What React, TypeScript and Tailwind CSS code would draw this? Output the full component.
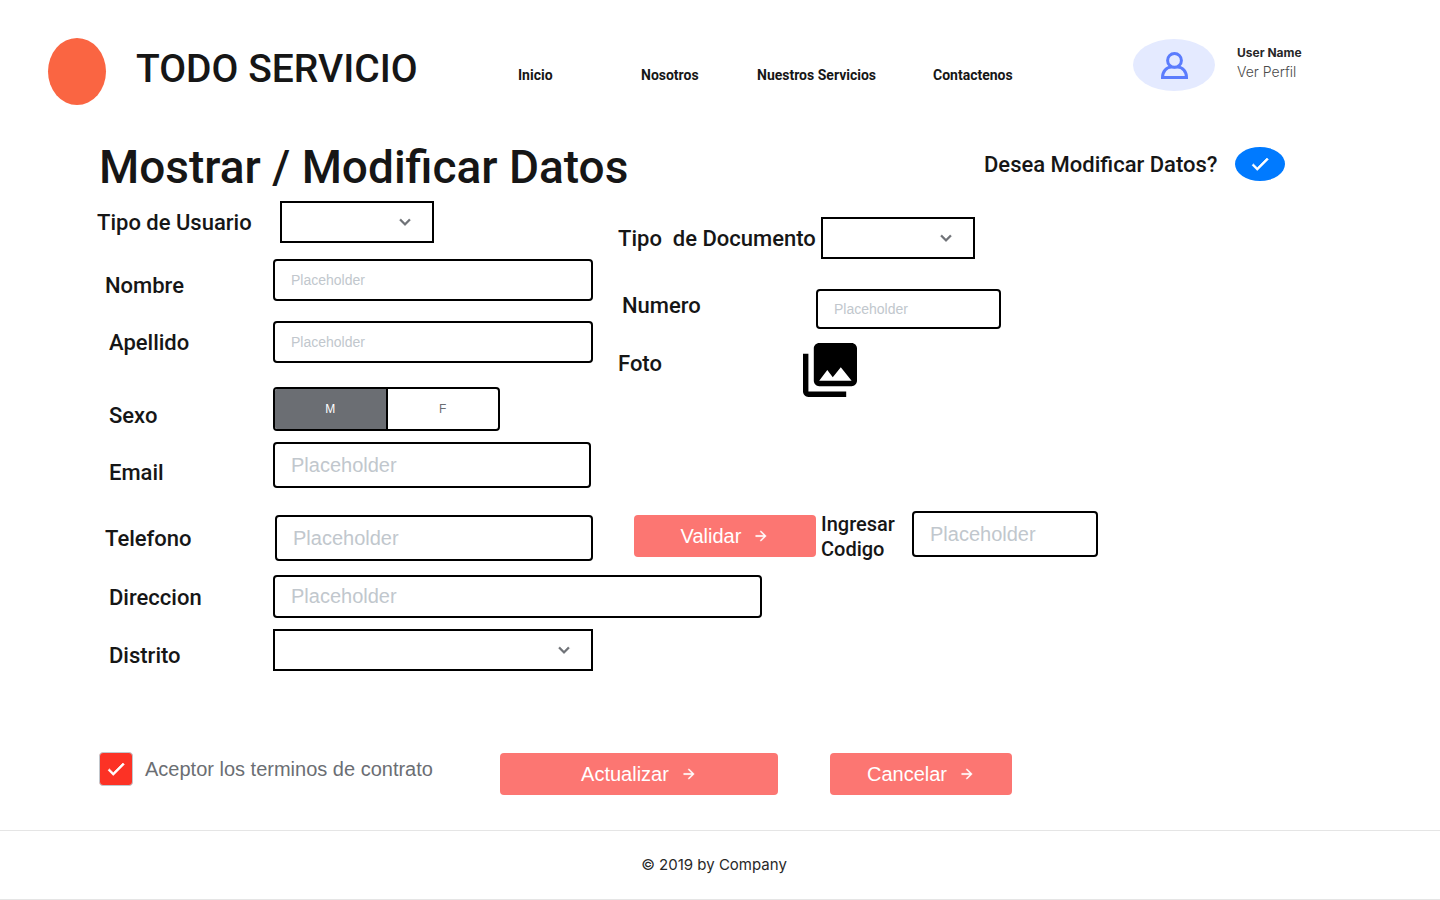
import type { ReactNode } from "react";

const HEADING = "font-['Roboto','Liberation_Sans',sans-serif] font-medium text-[#161616]";
const LABEL = "font-['Roboto','Liberation_Sans',sans-serif] font-medium text-[#161616] text-[22px] leading-[30px] pt-0.5 whitespace-nowrap";
const BOX = "border-2 border-black bg-white";
const FIELD = "border-2 border-black bg-white rounded px-4 outline-none placeholder:text-[#c1c7cd]";

function CheckIcon() {
  return (
    <svg viewBox="0 0 24 24" className="pointer-events-none absolute size-[22px] fill-white stroke-white stroke-[0.8]" aria-hidden="true">
      <path d="M9 16.17 4.83 12l-1.42 1.41L9 19 21 7l-1.41-1.41z" />
    </svg>
  );
}

function Dropdown({ id, className }: { id: string; className: string }) {
  return (
    <div className={`relative h-[42px] ${className}`}>
      <select id={id} className={`${BOX} size-full appearance-none px-4 outline-none`} defaultValue="">
        <option value=""></option>
      </select>
      <svg viewBox="0 0 24 24" className="pointer-events-none absolute top-[10px] right-[18px] size-[22px] fill-[#6f7277] stroke-[#6f7277] stroke-[0.4]" aria-hidden="true">
        <path d="M16.59 8.59 12 13.17 7.41 8.59 6 10l6 6 6-6z" />
      </svg>
    </div>
  );
}

function ActionButton({ children, className, type = "button" }: { children: ReactNode; className: string; type?: "button" | "submit" }) {
  return (
    <button type={type} className={`flex h-[42px] items-center justify-center gap-3 rounded bg-[#fc7672] text-xl text-white ${className}`}>
      {children}
      <svg viewBox="0 0 24 24" className="size-4 fill-white stroke-white stroke-[0.5]" aria-hidden="true">
        <path d="m12 4-1.41 1.41L16.17 11H4v2h12.17l-5.58 5.59L12 20l8-8z" />
      </svg>
    </button>
  );
}

function Header() {
  return (
    <header className="flex h-[143px] items-start pt-[38px] pl-12">
      <div className="h-[67px] w-[58px] shrink-0 rounded-[50%] bg-[#fa6542]" />
      <div className={`${HEADING} w-[412px] shrink-0 pl-[30px] text-[39px] leading-[62px] whitespace-nowrap`}>TODO SERVICIO</div>
      <nav className="grid shrink-0 grid-cols-[123px_116px_176px_200px] pt-[27px] font-['Roboto','Liberation_Sans',sans-serif] text-sm leading-5 font-bold whitespace-nowrap text-[#161616]">
        <a href="#inicio">Inicio</a>
        <a href="#nosotros">Nosotros</a>
        <a href="#servicios">Nuestros Servicios</a>
        <a href="#contacto">Contactenos</a>
      </nav>
      <div className="flex items-start gap-[22px] pt-px">
        <div className="flex h-[52px] w-[82px] items-center justify-center rounded-[50%] bg-[#e4eaff]">
          <svg viewBox="0 0 27 27" className="size-[27px] fill-[#e4eaff] stroke-[#5b7cfd] stroke-3" aria-hidden="true">
            <path d="M1.500 25.500c0-6 4-10.500 9-10.500h6c5 0 9 4.500 9 10.500z" />
            <circle cx="13.5" cy="8.4" r="6.9" />
          </svg>
        </div>
        <div className="pt-1 font-['Inter','Open_Sans',sans-serif] whitespace-nowrap">
          <div className="text-[12px] leading-5 font-bold text-[#282828]">User Name</div>
          <a href="#perfil" className="block text-[14px] leading-[18px] font-light text-[#4a4a4a]">Ver Perfil</a>
        </div>
      </div>
    </header>
  );
}

export default function App() {
  return (
    <div className="min-h-[900px] overflow-hidden bg-white font-['Liberation_Sans',Arial,sans-serif]">
      <Header />
      <main className="pl-[97px]">
        <div className="flex h-[58px] items-start">
          <h1 className={`${HEADING} w-[887px] shrink-0 pl-0.5 text-[46px] leading-[48px]`}>Mostrar / Modificar Datos</h1>
          <div className="flex h-[42px] items-center">
            <label htmlFor="modificar" className={`${LABEL} w-[251px]`}>Desea Modificar Datos?</label>
            <span className="relative flex items-center justify-center">
              <input id="modificar" type="checkbox" defaultChecked className="h-[34px] w-[50px] appearance-none rounded-[50%] bg-[#007aff]" />
              <CheckIcon />
            </span>
          </div>
        </div>

        <form>
          <div className="flex items-start">
            <div className="w-[521px] shrink-0">
              <div className="flex items-center">
                <label htmlFor="usuario" className={`${LABEL} w-[183px]`}>Tipo de Usuario</label>
                <Dropdown id="usuario" className="w-[154px]" />
              </div>
              <div className="mt-4 flex items-end">
                <label htmlFor="nombre" className={`${LABEL} w-44 pl-2`}>Nombre</label>
                <input id="nombre" type="text" placeholder="Placeholder" className={`${FIELD} h-[42px] w-80 text-sm`} />
              </div>
              <div className="mt-5 flex items-center">
                <label htmlFor="apellido" className={`${LABEL} w-44 pl-3`}>Apellido</label>
                <input id="apellido" type="text" placeholder="Placeholder" className={`${FIELD} h-[42px] w-80 text-sm`} />
              </div>
              <div role="radiogroup" aria-labelledby="sexo" className="mt-6 flex items-end">
                <span id="sexo" className={`${LABEL} w-44 pl-3`}>Sexo</span>
                <div className={`${BOX} flex h-11 w-[227px] overflow-hidden rounded text-xs`}>
                  <label className="flex flex-1 items-center justify-center border-r-2 border-black text-[#6b6e73] has-checked:bg-[#6b6e73] has-checked:text-white">
                    <input type="radio" name="sexo" value="M" defaultChecked className="sr-only" />M
                  </label>
                  <label className="flex flex-1 items-center justify-center text-[#6b6e73] has-checked:bg-[#6b6e73] has-checked:text-white">
                    <input type="radio" name="sexo" value="F" className="sr-only" />F
                  </label>
                </div>
              </div>
              <div className="mt-[11px] flex items-end">
                <label htmlFor="email" className={`${LABEL} w-44 pl-3`}>Email</label>
                <input id="email" type="email" placeholder="Placeholder" className={`${FIELD} h-[46px] w-[318px] text-xl`} />
              </div>
            </div>

            <div className="pt-4">
              <div className="flex items-center">
                <label htmlFor="documento" className={`${LABEL} w-[203px] whitespace-pre`}>{"Tipo  de Documento"}</label>
                <Dropdown id="documento" className="w-[154px]" />
              </div>
              <div className="mt-[30px] flex items-start">
                <label htmlFor="numero" className={`${LABEL} w-[198px] pl-1`}>Numero</label>
                <input id="numero" type="text" placeholder="Placeholder" className={`${FIELD} h-10 w-[185px] text-sm`} />
              </div>
              <div className="mt-[14px] flex items-start">
                <div className="w-[185px] pt-1">
                  <span className={`${LABEL} block`}>Foto</span>
                </div>
                <button type="button" aria-label="Foto">
                  <svg viewBox="2 2 20 20" className="size-[54px] fill-black" aria-hidden="true">
                    <path d="M22 16V4c0-1.100-.9-2-2-2H8c-1.100 0-2 .9-2 2v12c0 1.100.9 2 2 2h12c1.100 0 2-.9 2-2zm-11-4 2.030 2.710L16 11l4 5H8l3-4zM2 6v14c0 1.100.9 2 2 2h14v-2H4V6H2z" />
                  </svg>
                </button>
              </div>
            </div>
          </div>

          <div className="mt-[23px] flex items-start">
            <div className="flex w-[537px] shrink-0 items-center pt-1">
              <label htmlFor="telefono" className={`${LABEL} w-[178px] pl-2`}>Telefono</label>
              <input id="telefono" type="tel" placeholder="Placeholder" className={`${FIELD} h-[46px] w-[318px] text-xl`} />
            </div>
            <ActionButton className="mt-1 w-[182px]">Validar</ActionButton>
            <label htmlFor="codigo" className={`${HEADING} w-24 pt-px pl-[5px] text-xl leading-[25px]`}>Ingresar Codigo</label>
            <input id="codigo" type="text" placeholder="Placeholder" className={`${FIELD} h-[46px] w-[186px] text-xl`} />
          </div>
          <div className="mt-[13px] flex items-center">
            <label htmlFor="direccion" className={`${LABEL} w-44 pl-3`}>Direccion</label>
            <input id="direccion" type="text" placeholder="Placeholder" className={`${FIELD} h-[43px] w-[489px] text-xl`} />
          </div>
          <div className="mt-[11px] flex items-end">
            <label htmlFor="distrito" className={`${LABEL} w-44 pl-3`}>Distrito</label>
            <Dropdown id="distrito" className="w-80" />
          </div>

          <div className="mt-[81px] flex h-[78px] items-start pl-0.5">
            <label className="flex w-[401px] items-center gap-3 text-xl text-[#6b6e73]">
              <span className="relative flex items-center justify-center">
                <input type="checkbox" defaultChecked className="size-[34px] appearance-none rounded border border-[#c1c7cd] bg-[#fc3225]" />
                <CheckIcon />
              </span>
              Aceptor los terminos de contrato
            </label>
            <div className="flex gap-[52px] pt-px">
              <ActionButton type="submit" className="w-[278px]">Actualizar</ActionButton>
              <ActionButton className="w-[182px]">Cancelar</ActionButton>
            </div>
          </div>
        </form>
      </main>
      <footer className="flex h-[70px] items-center justify-center border-y border-[#e5e5e5] pr-3 font-['Inter','Open_Sans',sans-serif] text-[15px] text-[#282828]">
        © 2019 by Company
      </footer>
    </div>
  );
}
